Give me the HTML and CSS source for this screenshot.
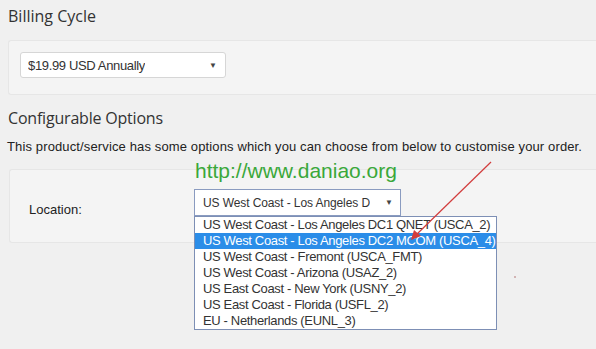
FILE: index.html
```html
<!DOCTYPE html>
<html>
<head>
<meta charset="utf-8">
<link rel="stylesheet" href="styles.css">
</head>
<body>
<div class="page">
  <h3 class="heading">Billing Cycle</h3>
  <div class="panel panel-billing">
    <div class="select select-billing">
      <span class="select-text">$19.99 USD Annually</span>
      <span class="caret">▼</span>
    </div>
  </div>
  <h3 class="heading heading-config">Configurable Options</h3>
  <p class="intro">This product/service has some options which you can choose from below to customise your order.</p>
  <div class="panel panel-config">
    <label class="label">Location:</label>
    <div class="select-wrap">
      <div class="watermark">http://www.daniao.org</div>
      <div class="select select-location">
        <span class="select-text">US West Coast - Los Angeles D</span>
        <span class="caret">▼</span>
      </div>
      <ul class="listbox">
        <li>US West Coast - Los Angeles DC1 QNET (USCA_2)</li>
        <li class="selected">US West Coast - Los Angeles DC2 MCOM (USCA_4)</li>
        <li>US West Coast - Fremont (USCA_FMT)</li>
        <li>US West Coast - Arizona (USAZ_2)</li>
        <li>US East Coast - New York (USNY_2)</li>
        <li>US East Coast - Florida (USFL_2)</li>
        <li>EU - Netherlands (EUNL_3)</li>
      </ul>
    </div>
  </div>
</div>
<svg class="arrow" width="596" height="349" viewBox="0 0 596 349">
  <line x1="491" y1="162" x2="416" y2="235" stroke="#d23c3c" stroke-width="1.2"/>
  <polygon points="411,240 414,230 421,236" fill="#d23c3c"/>
  <circle cx="515" cy="277" r="1" fill="#c9a0a0"/>
</svg>
</body>
</html>
```

FILE: styles.css
```css
html, body {
  margin: 0;
  padding: 0;
  background: #f0f0f0;
  width: 596px;
  height: 349px;
  overflow: hidden;
}
.page {
  padding: 5px 0 0 8px;
  font-family: "Liberation Sans", Arial, sans-serif;
  color: #333;
}
.heading {
  margin: 0;
  font-family: "Open Sans", sans-serif;
  font-weight: 400;
  font-size: 16px;
  line-height: 22px;
  color: #333;
}
.heading-config {
  margin-top: 12px;
  letter-spacing: -0.2px;
}
.panel {
  background: #f4f4f4;
  border: 1px solid #e6e6e6;
  border-right: none;
  border-radius: 3px 0 0 3px;
  margin-right: -10px;
}
.panel-billing {
  margin-top: 13px;
  height: 55px;
  padding: 11px 0 0 11px;
  box-sizing: border-box;
}
.select {
  background: #fff;
  border: 1px solid #d6d6d6;
  border-radius: 3px;
  box-sizing: border-box;
  display: flex;
  align-items: center;
  justify-content: space-between;
  font-size: 13px;
  color: #333;
}
.select-text {
  white-space: nowrap;
  overflow: hidden;
  letter-spacing: -0.35px;
}
.select-billing {
  width: 206px;
  height: 26px;
  padding: 0 8px 0 7px;
}
.caret {
  font-size: 8px;
  color: #444;
  flex: none;
}
.intro {
  margin: 10px 0 0 -1px;
  font-size: 13px;
  line-height: 16px;
  letter-spacing: 0.13px;
  color: #222;
}
.panel-config {
  margin-top: 14px;
  height: 74px;
  box-sizing: border-box;
  display: flex;
  align-items: flex-start;
  padding: 19px 0 0 19px;
  margin-left: 1px;
}
.label {
  font-size: 13px;
  width: 165px;
  margin-top: 13px;
  color: #222;
}
.select-wrap {
  position: relative;
}
.watermark {
  position: absolute;
  left: 1px;
  top: -30px;
  font-size: 21px;
  color: #3aa83a;
  white-space: nowrap;
}
.select-location {
  width: 207px;
  height: 27px;
  border: 1px solid #8a9bc0;
  border-radius: 0;
  padding: 0 7px 0 8px;
  font-size: 12px;
}
.select-location .select-text {
  letter-spacing: -0.1px;
}
.listbox {
  position: absolute;
  left: 0;
  top: 27px;
  margin: 0;
  padding: 0;
  list-style: none;
  width: 303px;
  box-sizing: border-box;
  border: 1px solid #7d8fb5;
  background: #fff;
  font-size: 13px;
  letter-spacing: -0.35px;
  z-index: 2;
}
.listbox li {
  height: 16px;
  line-height: 16px;
  padding-left: 8px;
  white-space: nowrap;
  color: #333;
}
.listbox li.selected {
  background: #2b8de8;
  color: #fff;
}
.arrow {
  position: absolute;
  left: 0;
  top: 0;
  z-index: 3;
  pointer-events: none;
}
```
